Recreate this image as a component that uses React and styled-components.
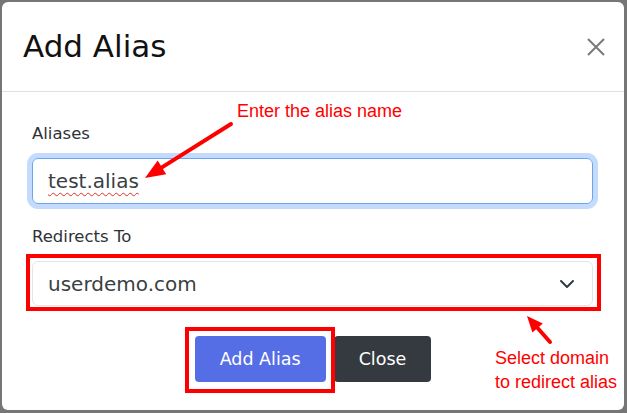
import React from 'react'
import styled, {createGlobalStyle, css} from 'styled-components'

const Global = createGlobalStyle`
  html, body { margin: 0; padding: 0; }
  body { font-family: "DejaVu Sans", "Noto Sans", sans-serif; }
`

const App = () => {
  return (
    <Frame>
      <Global />
      <Dialog>
        <Header>
          <Title>Add Alias</Title>
          <CloseX aria-label="close">
            <svg width="18" height="18" viewBox="0 0 18 18">
              <path d="M1 1 L17 17 M17 1 L1 17" stroke="#7a7a7a" strokeWidth="2" fill="none" />
            </svg>
          </CloseX>
        </Header>

        <Body>
          <Group>
            <Label>Aliases</Label>
            <Field role="textbox" focused>
              <Misspelled>test.alias</Misspelled>
            </Field>
          </Group>
          <Group>
            <Label>Redirects To</Label>
            <Field marked>
              <span>userdemo.com</span>
              <svg width="16" height="16" viewBox="0 0 16 16">
                <path d="M2 5 L8 11 L14 5" stroke="#343a40" strokeWidth="2" fill="none" strokeLinecap="round" strokeLinejoin="round" />
              </svg>
            </Field>
          </Group>
        </Body>

        <Footer>
          <Button variant="primary" marked>Add Alias</Button>
          <Button variant="dark">Close</Button>
        </Footer>

        <Arrows viewBox="0 0 622 408" width="622" height="408">
          <line x1="229" y1="122" x2="159.9" y2="165.4" stroke="#ff0000" strokeWidth="4" strokeLinecap="round" />
          <polygon points="143,176 164.2,172.2 155.7,158.6" fill="#ff0000" />
          <line x1="548" y1="340" x2="535.6" y2="326" stroke="#ff0000" strokeWidth="4" strokeLinecap="round" />
          <polygon points="525,314 540.8,321.4 530.4,330.6" fill="#ff0000" />
        </Arrows>
        <Note left={235} top={97}>Enter the alias name</Note>
        <Note left={493} top={344}>Select domain<br />to redirect alias</Note>
      </Dialog>
    </Frame>
  )
}

export default App

const markBox = css`
  position: relative;
  &::after {
    content: '';
    position: absolute;
    border: 4px solid #ff0000;
    pointer-events: none;
  }
`

const Frame = styled.div`
  width: 627px;
  height: 413px;
  box-sizing: border-box;
  padding: 2px 3px 3px 2px;
  background: #767676;
`

const Dialog = styled.div`
  position: relative;
  background: #fff;
  border-radius: 6px;
  height: 408px;
  overflow: hidden;
`

const Header = styled.div`
  height: 89px;
  display: flex;
  align-items: center;
  justify-content: space-between;
  padding: 0 19px 0 21px;
  border-bottom: 1px solid #dee2e6;
`

const Title = styled.h5`
  margin: 0;
  font-size: 31px;
  font-weight: 400;
  line-height: 1.2;
  color: #111;
`

const CloseX = styled.button`
  border: 0;
  background: none;
  padding: 0;
  width: 18px;
  height: 18px;
  display: flex;
`

const Body = styled.div`
  padding: 30px 31px 0 30px;
  display: flex;
  flex-direction: column;
  gap: 21px;
`

const Group = styled.div`
  display: flex;
  flex-direction: column;
`

const Label = styled.label`
  font-size: 16.5px;
  line-height: 24px;
  color: #2e3236;
  margin-bottom: 12px;
`

const Field = styled.div`
  height: ${p => (p.focused ? 46 : 45)}px;
  box-sizing: border-box;
  border: 1px solid ${p => (p.focused ? '#6aa6ee' : '#e1e4e8')};
  border-radius: 6px;
  box-shadow: ${p => (p.focused ? '0 0 0 5px #c4dbfd' : 'none')};
  padding: 0 17px 0 15px;
  display: flex;
  align-items: center;
  justify-content: space-between;
  font-size: 20px;
  color: #3a3f44;
  ${p => p.marked && markBox}
  &::after {
    top: -8px;
    left: -7px;
    right: -9px;
    bottom: -6px;
  }
`

const Misspelled = styled.span`
  text-decoration: underline wavy #e0302a;
  text-decoration-thickness: 1px;
  text-underline-offset: 4px;
  text-decoration-skip-ink: none;
`

const Footer = styled.div`
  display: flex;
  justify-content: center;
  gap: 8px;
  padding: 30px 0 28px;
`

const Button = styled.button`
  height: 46px;
  padding: 0 25px;
  border: 0;
  border-radius: 4px;
  font-family: "DejaVu Sans", sans-serif;
  font-size: 17.5px;
  color: #fff;
  background: ${p => (p.variant === 'primary' ? '#556ee6' : '#343a40')};
  ${p => p.marked && markBox}
  z-index: ${p => (p.marked ? 1 : 0)};
  &::after {
    top: -9px;
    left: -10px;
    right: -9px;
    bottom: -11px;
  }
`

const Arrows = styled.svg`
  position: absolute;
  left: 0;
  top: 0;
  pointer-events: none;
`

const Note = styled.div`
  position: absolute;
  left: ${p => p.left}px;
  top: ${p => p.top}px;
  font-family: "Liberation Sans", Arial, sans-serif;
  font-size: 18px;
  line-height: 24px;
  color: #ff0000;
  white-space: nowrap;
`
